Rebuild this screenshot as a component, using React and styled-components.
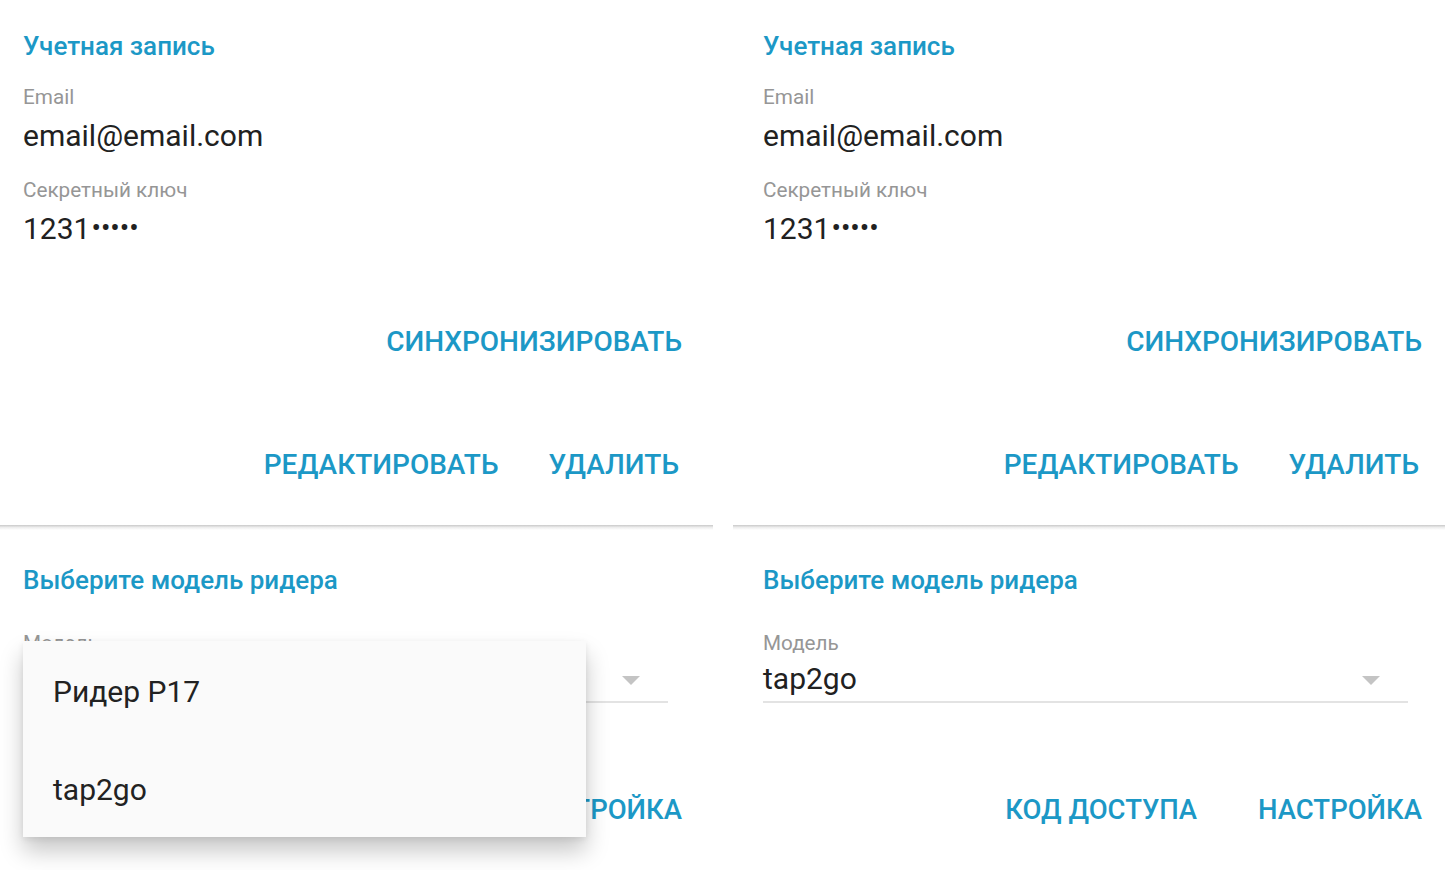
import React from "react";
import styled, { createGlobalStyle } from "styled-components";

const Global = createGlobalStyle`
  html, body { margin: 0; padding: 0; background: #ffffff; }
  body { font-family: Roboto, "Noto Sans", "Liberation Sans", sans-serif; -webkit-font-smoothing: antialiased; }
  * { box-sizing: border-box; }
`;

const BLUE = "#1c98c6";

const Page = styled.div`
  display: flex;
  gap: 20px;
  width: 1445px;
  height: 870px;
  overflow: hidden;
  background: #fff;
`;

const Panel = styled.div`
  width: ${(p) => p.$w}px;
  display: flex;
  flex-direction: column;
  flex-shrink: 0;
`;

const Card = styled.section`
  position: relative;
  padding: 30px ${(p) => p.$pr}px 43px ${(p) => p.$pl}px;
  display: flex;
  flex-direction: column;
  &::after {
    content: "";
    position: absolute;
    left: 0;
    right: 0;
    bottom: -5px;
    height: 5px;
    background: linear-gradient(to bottom, #c9c9c9, #eeeeee 50%, #ffffff);
  }
`;

const Title = styled.h2`
  margin: 0;
  font-size: 26px;
  line-height: 32px;
  font-weight: 500;
  color: ${BLUE};
  white-space: nowrap;
`;

const Label = styled.div`
  margin-top: ${(p) => p.$mt}px;
  font-size: 20.7px;
  line-height: 26px;
  color: #969696;
`;

const Value = styled.div`
  margin-top: ${(p) => p.$mt}px;
  font-size: 30px;
  line-height: 36px;
  color: #212121;
  white-space: nowrap;
`;

const Dots = styled.span`
  font-size: 28px;
  letter-spacing: 0;
  margin-left: 1px;
  vertical-align: 2px;
`;

const ButtonRow = styled.div`
  display: flex;
  justify-content: flex-end;
  gap: ${(p) => p.$gap || 50}px;
  margin-top: ${(p) => p.$mt}px;
  margin-right: ${(p) => p.$mr || 0}px;
`;

const TextButton = styled.button`
  border: none;
  background: none;
  padding: 0;
  font-family: inherit;
  font-size: ${(p) => p.$fs || 28}px;
  line-height: 34px;
  font-weight: 500;
  color: ${BLUE};
  text-transform: uppercase;
  white-space: nowrap;
  cursor: pointer;
`;

const Reader = styled.section`
  position: relative;
  padding: 39px ${(p) => p.$pr}px 0 ${(p) => p.$pl}px;
  display: flex;
  flex-direction: column;
`;

const Select = styled.div`
  width: 645px;
  display: flex;
  flex-direction: column;
  border-bottom: 2px solid #e3e3e3;
  padding-bottom: 4px;
`;

const SelectRow = styled.div`
  display: flex;
  align-items: center;
  justify-content: space-between;
  padding-right: 28px;
  margin-top: 5px;
`;

const SelectValue = styled.div`
  font-size: 30px;
  line-height: 36px;
  color: #212121;
`;

const Arrow = styled.span`
  width: 0;
  height: 0;
  border-left: 9px solid transparent;
  border-right: 9px solid transparent;
  border-top: 9px solid #c4c4c4;
  margin-top: 2px;
`;

const Menu = styled.ul`
  position: absolute;
  left: 23px;
  top: 116px;
  width: 563px;
  margin: 0;
  padding: 33px 0 29px;
  list-style: none;
  display: flex;
  flex-direction: column;
  gap: 62px;
  background: #fafafa;
  box-shadow: 0 14px 22px rgba(0, 0, 0, 0.22), 0 2px 6px rgba(0, 0, 0, 0.08);
  z-index: 2;
`;

const MenuItem = styled.li`
  padding-left: 30px;
  font-size: 30px;
  line-height: 36px;
  color: #222;
`;

function AccountCard({ pl, pr }) {
  return (
    <Card $pl={pl} $pr={pr}>
      <Title>Учетная запись</Title>
      <Label $mt={22}>Email</Label>
      <Value $mt={8}>email@email.com</Value>
      <Label $mt={23}>Секретный ключ</Label>
      <Value $mt={7}>
        1231<Dots>•••••</Dots>
      </Value>
      <ButtonRow $mt={78}>
        <TextButton>Синхронизировать</TextButton>
      </ButtonRow>
      <ButtonRow $mt={89} $mr={3}>
        <TextButton>Редактировать</TextButton>
        <TextButton>Удалить</TextButton>
      </ButtonRow>
    </Card>
  );
}

function ReaderCard({ pl, pr, open }) {
  return (
    <Reader $pl={pl} $pr={pr}>
      <Title>Выберите модель ридера</Title>
      <Label $mt={34}>Модель</Label>
      <Select>
        <SelectRow>
          <SelectValue>{open ? "\u00a0" : "tap2go"}</SelectValue>
          <Arrow />
        </SelectRow>
      </Select>
      <ButtonRow $mt={90} $gap={61}>
        <TextButton $fs={27.5}>Код доступа</TextButton>
        <TextButton $fs={27.5}>Настройка</TextButton>
      </ButtonRow>
      {open && (
        <Menu>
          <MenuItem>Ридер P17</MenuItem>
          <MenuItem>tap2go</MenuItem>
        </Menu>
      )}
    </Reader>
  );
}

export default function App() {
  return (
    <>
      <Global />
      <Page>
        <Panel $w={713}>
          <AccountCard pl={23} pr={31} />
          <ReaderCard pl={23} pr={31} open />
        </Panel>
        <Panel $w={712}>
          <AccountCard pl={30} pr={23} />
          <ReaderCard pl={30} pr={23} />
        </Panel>
      </Page>
    </>
  );
}
